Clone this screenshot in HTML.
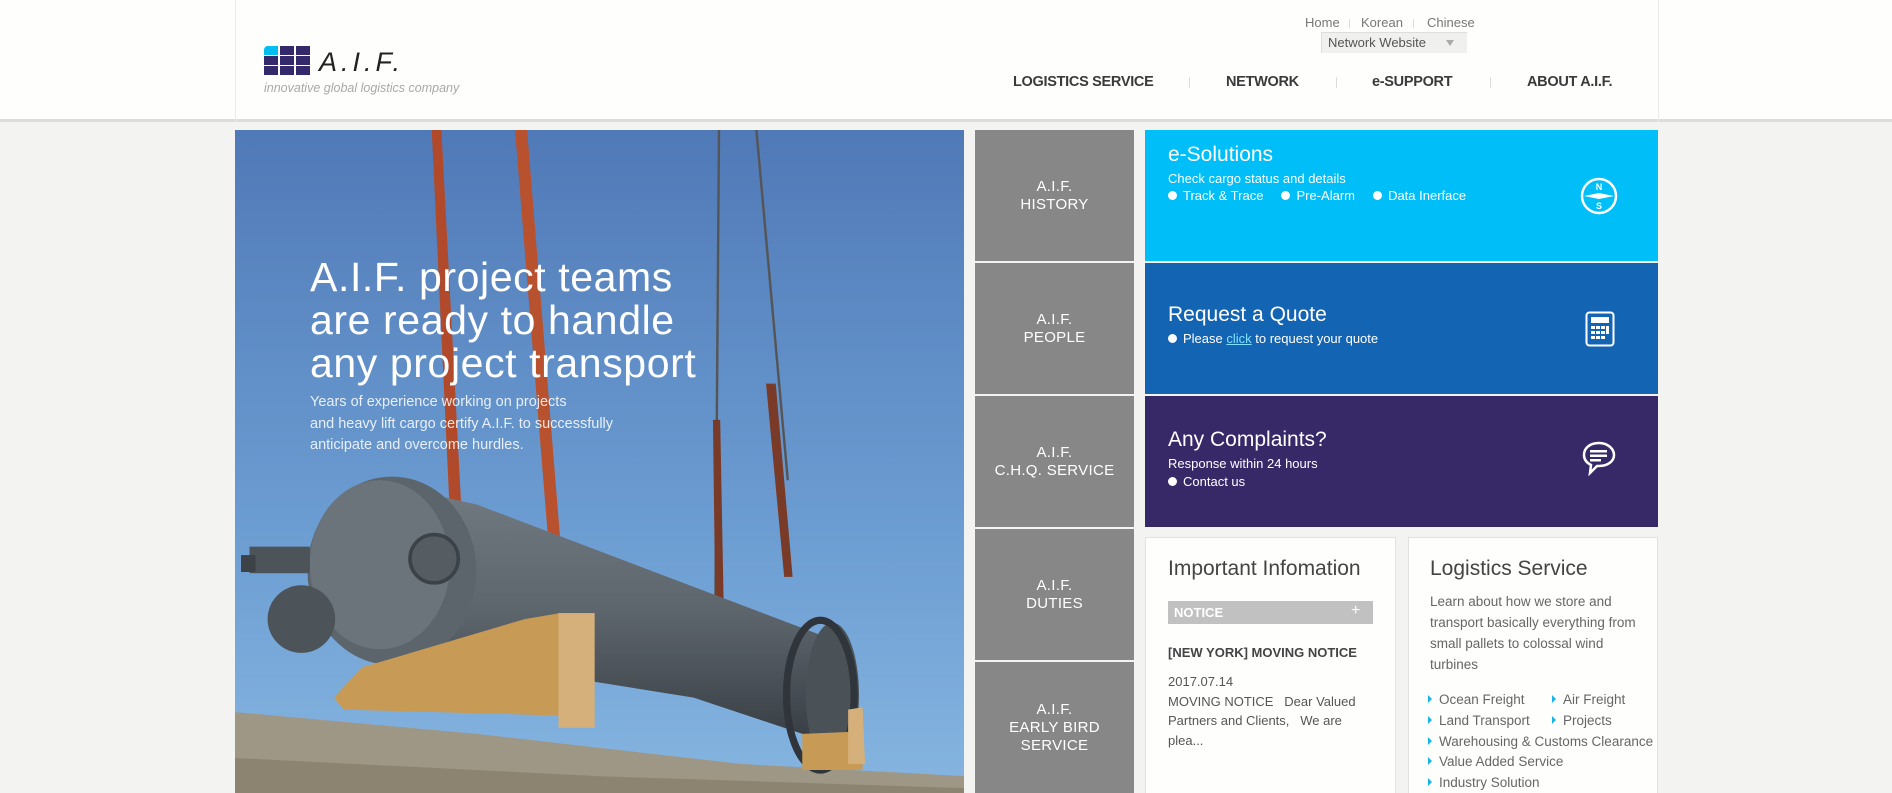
<!DOCTYPE html>
<html><head><meta charset="utf-8">
<style>
*{margin:0;padding:0;box-sizing:border-box}
body{width:1892px;height:793px;overflow:hidden;background:#f3f3f1;font-family:"Liberation Sans",sans-serif;position:relative}
.abs{position:absolute}
#hdr{left:0;top:0;width:1892px;height:122px;background:#fefefc;border-bottom:3px solid #dcdcdc}
#hdr .cl{position:absolute;top:0;height:122px;width:1px;background:#ececec}
.t{position:absolute;white-space:nowrap}
.nav{font-size:14.5px;font-weight:bold;color:#3a3a3a;top:74px;letter-spacing:-0.3px}
.sep{position:absolute;top:77px;width:1px;height:11px;background:#ddd}
.tile{position:absolute;left:975px;width:159px;height:131px;background:#878787;color:#fff;font-size:15px;line-height:18px;text-align:center;display:flex;align-items:center;justify-content:center;letter-spacing:0.3px}
.box{position:absolute;left:1145px;width:513px;height:131px;color:#fff}
.box .h{position:absolute;left:23px;font-size:21px}
.box .s{position:absolute;left:23px;font-size:13px;white-space:nowrap}
.bul{display:inline-block;width:9px;height:9px;border-radius:50%;background:#fff;margin-right:6px;position:relative;top:0px}
.card{position:absolute;top:537px;height:256px;background:#fefefc;border:1px solid #e2e2e0;border-bottom:none}
.li{position:absolute;font-size:13.5px;color:#666;white-space:nowrap}
.li:before{content:"";display:inline-block;border-left:4px solid #1ab3e8;border-top:4px solid transparent;border-bottom:4px solid transparent;margin-right:7px;position:relative;top:-1px}
</style></head><body>
<div id="hdr" class="abs">
 <div class="cl" style="left:235px"></div><div class="cl" style="left:1658px"></div>
 <svg class="abs" style="left:264px;top:46px" width="46" height="29" viewBox="0 0 46 29">
  <path d="M0 9V4a4 4 0 0 1 4-4h10v9z" fill="#00bdf2"/>
  <rect x="16" y="0" width="14" height="9" fill="#34296a"/><rect x="32" y="0" width="14" height="9" fill="#34296a"/>
  <rect x="0" y="10" width="14" height="9" fill="#34296a"/><rect x="16" y="10" width="14" height="9" fill="#34296a"/><rect x="32" y="10" width="14" height="9" fill="#34296a"/>
  <rect x="0" y="20" width="14" height="9" fill="#34296a"/><rect x="16" y="20" width="14" height="9" fill="#34296a"/><rect x="32" y="20" width="14" height="9" fill="#34296a"/>
 </svg>
 <div class="t" style="left:319px;top:47px;font-size:27px;font-style:italic;color:#222;letter-spacing:4px">A.I.F.</div>
 <div class="t" style="left:264px;top:81px;font-size:12.5px;font-style:italic;color:#a8a8a8">innovative global logistics company</div>
 <div class="t" style="left:1305px;top:15px;font-size:13px;color:#777">Home</div>
 <div class="sep" style="left:1349px;top:19px;height:9px"></div>
 <div class="t" style="left:1361px;top:15px;font-size:13px;color:#777">Korean</div>
 <div class="sep" style="left:1413px;top:19px;height:9px"></div>
 <div class="t" style="left:1427px;top:15px;font-size:13px;color:#777">Chinese</div>
 <div class="abs" style="left:1321px;top:32px;width:146px;height:21px;background:#f0f0ee;border-top:1px solid #ddd;border-left:1px solid #ddd"></div>
 <div class="t" style="left:1328px;top:35px;font-size:13px;color:#555">Network Website</div>
 <div class="abs" style="left:1446px;top:40px;border-top:6px solid #aaa;border-left:4px solid transparent;border-right:4px solid transparent"></div>
 <div class="t nav" style="left:1013px">LOGISTICS SERVICE</div>
 <div class="sep" style="left:1189px"></div>
 <div class="t nav" style="left:1226px">NETWORK</div>
 <div class="sep" style="left:1336px"></div>
 <div class="t nav" style="left:1372px">e-SUPPORT</div>
 <div class="sep" style="left:1490px"></div>
 <div class="t nav" style="left:1527px">ABOUT A.I.F.</div>
</div>

<svg class="abs" style="left:235px;top:130px" width="729" height="663" viewBox="0 0 604 549" preserveAspectRatio="none">
 <defs>
  <linearGradient id="sky" x1="0" y1="0" x2="0" y2="1"><stop offset="0" stop-color="#5079b7"/><stop offset="0.6" stop-color="#6c9dd2"/><stop offset="1" stop-color="#86b5e0"/></linearGradient>
  <linearGradient id="pipe" x1="0" y1="0" x2="0" y2="1"><stop offset="0" stop-color="#727b82"/><stop offset="0.5" stop-color="#5d656c"/><stop offset="1" stop-color="#363c42"/></linearGradient>
 </defs>
 <rect width="604" height="549" fill="url(#sky)"/>
 <polygon points="0,482 200,500 420,525 604,535 604,549 0,549" fill="#9e9786"/>
 <polygon points="0,520 300,535 604,545 604,549 0,549" fill="#8c8470"/>
 <polygon points="163,0 171,0 190,360 180,360" fill="#b04a2a"/>
 <polygon points="232,0 242,0 276,420 266,420" fill="#b8512e"/>
 <line x1="401" y1="0" x2="398" y2="400" stroke="#555" stroke-width="2"/>
 <line x1="432" y1="0" x2="458" y2="290" stroke="#555" stroke-width="2"/>
 <polygon points="396,240 402,240 405,400 398,400" fill="#7a3a28"/>
 <polygon points="440,210 448,210 462,370 455,370" fill="#7a3a28"/>
 <polygon points="110,290 200,310 490,420 500,510 380,470 130,430" fill="url(#pipe)"/>
 <ellipse cx="495" cy="468" rx="22" ry="60" fill="#4a5258"/>
 <ellipse cx="485" cy="468" rx="28" ry="62" fill="none" stroke="#2f353a" stroke-width="6"/>
 <ellipse cx="130" cy="365" rx="70" ry="78" fill="#5d656c"/>
 <ellipse cx="120" cy="360" rx="58" ry="70" fill="#6b747b"/>
 <circle cx="165" cy="355" r="20" fill="#555d63" stroke="#3c4247" stroke-width="3"/>
 <circle cx="55" cy="405" r="28" fill="#4c5359"/>
 <rect x="12" y="345" width="50" height="22" fill="#4c5359"/>
 <rect x="5" y="352" width="12" height="14" fill="#3c4247"/>
 <polygon points="82,470 105,445 240,405 270,400 275,485 90,480" fill="#c79a56"/>
 <rect x="268" y="400" width="30" height="95" fill="#d6b07a"/>
 <polygon points="470,500 520,498 520,530 470,530" fill="#c79a56"/>
 <polygon points="508,480 520,478 522,525 508,525" fill="#d6b07a"/>
</svg>
<div class="t" style="left:310px;top:256px;font-size:41px;line-height:43px;color:#fff;letter-spacing:0.6px">A.I.F. project teams<br>are ready to handle<br>any project transport</div>
<div class="t" style="left:310px;top:392px;font-size:14.5px;line-height:21.5px;color:rgba(255,255,255,.85)">Years of experience working on projects<br>and heavy lift cargo certify A.I.F. to successfully<br>anticipate and overcome hurdles.</div>

<div class="tile" style="top:130px">A.I.F.<br>HISTORY</div>
<div class="tile" style="top:263px">A.I.F.<br>PEOPLE</div>
<div class="tile" style="top:396px">A.I.F.<br>C.H.Q. SERVICE</div>
<div class="tile" style="top:529px">A.I.F.<br>DUTIES</div>
<div class="tile" style="top:662px">A.I.F.<br>EARLY BIRD<br>SERVICE</div>

<div class="box" style="top:130px;background:#00bff8">
 <div class="h" style="top:13px">e-Solutions</div>
 <div class="s" style="top:41px">Check cargo status and details</div>
 <div class="s" style="top:58px"><span class="bul"></span>Track &amp; Trace &nbsp;&nbsp;&nbsp;&nbsp;<span class="bul"></span>Pre-Alarm &nbsp;&nbsp;&nbsp;&nbsp;<span class="bul"></span>Data Inerface</div>
 <svg class="abs" style="left:434px;top:46px" width="40" height="40" viewBox="0 0 40 40"><circle cx="20" cy="20" r="17" fill="none" stroke="#fff" stroke-width="2.5"/><path d="M5 20 L20 17 L35 20 L20 23Z" fill="#fff"/><text x="20" y="14" font-size="9" fill="#fff" text-anchor="middle" font-family="Liberation Sans" font-weight="bold">N</text><text x="20" y="33" font-size="9" fill="#fff" text-anchor="middle" font-family="Liberation Sans" font-weight="bold">S</text></svg>
</div>
<div class="box" style="top:263px;background:#1464b4">
 <div class="h" style="top:40px">Request a Quote</div>
 <div class="s" style="top:68px"><span class="bul"></span>Please <u style="color:#7fe0ff">click</u> to request your quote</div>
 <svg class="abs" style="left:440px;top:48px" width="30" height="36" viewBox="0 0 30 36"><rect x="1.5" y="1.5" width="27" height="33" rx="3" fill="none" stroke="#fff" stroke-width="2"/><rect x="6" y="6" width="18" height="6" fill="#fff"/><g fill="#fff"><rect x="6" y="15" width="4" height="3"/><rect x="11" y="15" width="4" height="3"/><rect x="16" y="15" width="4" height="3"/><rect x="6" y="20" width="4" height="3"/><rect x="11" y="20" width="4" height="3"/><rect x="16" y="20" width="4" height="3"/><rect x="6" y="25" width="4" height="3"/><rect x="11" y="25" width="4" height="3"/><rect x="16" y="25" width="4" height="3"/><rect x="21" y="15" width="3" height="8"/></g></svg>
</div>
<div class="box" style="top:396px;background:#372868">
 <div class="h" style="top:32px">Any Complaints?</div>
 <div class="s" style="top:60px">Response within 24 hours</div>
 <div class="s" style="top:78px"><span class="bul"></span>Contact us</div>
 <svg class="abs" style="left:436px;top:44px" width="36" height="36" viewBox="0 0 36 36"><path d="M18 3C9 3 3 8 3 15c0 5 3 8 7 10l-1 8 7-7c1 0 1 0 2 0 9 0 15-5 15-11S27 3 18 3z" fill="none" stroke="#fff" stroke-width="2.5"/><rect x="9" y="10" width="17" height="2.5" fill="#fff"/><rect x="9" y="14.5" width="17" height="2.5" fill="#fff"/><rect x="9" y="19" width="11" height="2.5" fill="#fff"/></svg>
</div>

<div class="card" style="left:1145px;width:251px">
 <div class="t" style="left:22px;top:19px;font-size:21px;color:#444">Important Infomation</div>
 <div class="abs" style="left:22px;top:63px;width:205px;height:23px;background:#c1c1c1"></div>
 <div class="t" style="left:28px;top:67px;font-size:13px;font-weight:bold;color:#fff">NOTICE</div>
 <div class="t" style="left:205px;top:64px;font-size:16px;color:#fff">+</div>
 <div class="t" style="left:22px;top:107px;font-size:13px;font-weight:bold;color:#444">[NEW YORK] MOVING NOTICE</div>
 <div class="t" style="left:22px;top:134px;font-size:13px;line-height:19.5px;color:#555">2017.07.14<br>MOVING NOTICE &nbsp;&nbsp;Dear Valued<br>Partners and Clients, &nbsp;&nbsp;We are<br>plea...</div>
</div>
<div class="card" style="left:1408px;width:250px">
 <div class="t" style="left:21px;top:19px;font-size:21px;color:#444">Logistics Service</div>
 <div class="t" style="left:21px;top:53px;font-size:13.5px;line-height:21px;color:#666">Learn about how we store and<br>transport basically everything from<br>small pallets to colossal wind<br>turbines</div>
</div>
<div class="li" style="left:1428px;top:692px">Ocean Freight</div>
<div class="li" style="left:1552px;top:692px">Air Freight</div>
<div class="li" style="left:1428px;top:713px">Land Transport</div>
<div class="li" style="left:1552px;top:713px">Projects</div>
<div class="li" style="left:1428px;top:734px">Warehousing &amp; Customs Clearance</div>
<div class="li" style="left:1428px;top:754px">Value Added Service</div>
<div class="li" style="left:1428px;top:775px">Industry Solution</div>
</body></html>
